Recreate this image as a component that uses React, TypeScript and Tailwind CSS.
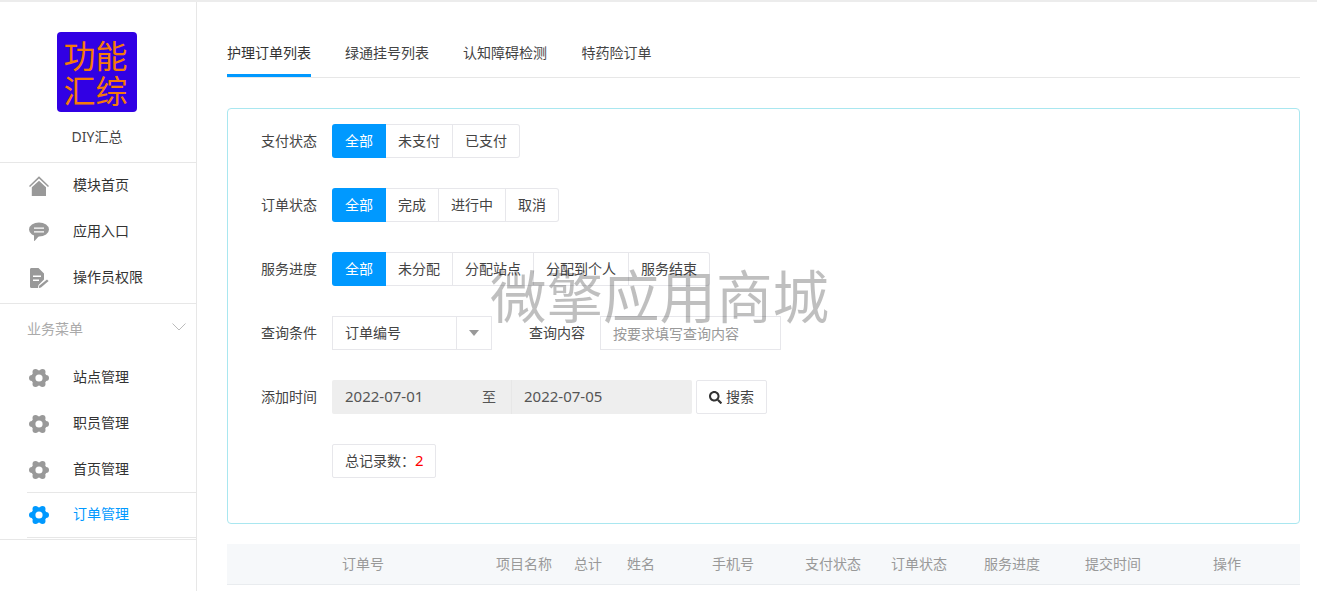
import React from "react";
import { FaSearch } from "react-icons/fa";

const font = { fontFamily: '"Noto Sans","Noto Sans CJK SC",sans-serif' };

function HomeIcon({ className }: { className?: string }) {
  return (
    <svg viewBox="0 0 20 20" className={className} fill="currentColor">
      <path d="M10 .2 20 10l-1 1.100L10 2.600 1 11.100 0 10z" />
      <path d="M10 4.800 17 11.200V20H2.800V11.200z" />
    </svg>
  );
}
function ChatIcon({ className }: { className?: string }) {
  return (
    <svg viewBox="0 0 20 20" className={className}>
      <ellipse cx="10" cy="7.500" rx="10" ry="7" fill="currentColor" />
      <path fill="currentColor" d="M5 12v6.500c0 .5.500.7.800.3L10 14z" />
      <path fill="#fff" d="M5 5.400h10v1.400H5zM5 9.200h10v1.400H5z" />
    </svg>
  );
}
function DocIcon({ className }: { className?: string }) {
  return (
    <svg viewBox="0 0 20 20" className={className}>
      <path fill="currentColor" d="M1 1.500C1 .7 1.600 0 2.400 0H9.500L15 5.500v6l-5.500 5.500-.6 3H2.400C1.600 20 1 19.300 1 18.500z" />
      <path fill="#fff" d="M4 7.500h8v1.500H4zM4 11.500h6v1.500H4z" />
      <path fill="currentColor" d="M18 11.500l1.600 1.600-7.600 6.500-2.200.4.400-2.200z" />
    </svg>
  );
}
function GearIcon({ className }: { className?: string }) {
  return (
    <svg viewBox="0 0 20 20" className={className} fill="currentColor">
      <circle cx="10" cy="10" r="7.800" />
      <circle cx="17" cy="10" r="3" />
      <circle cx="3" cy="10" r="3" />
      <circle cx="6.500" cy="3.900" r="3" />
      <circle cx="13.500" cy="3.900" r="3" />
      <circle cx="6.500" cy="16.100" r="3" />
      <circle cx="13.500" cy="16.100" r="3" />
      <circle cx="10" cy="10" r="3.600" fill="#fff" />
    </svg>
  );
}

function NavItem({ icon, label, active }: { icon: React.ReactNode; label: string; active?: boolean }) {
  return (
    <div className={`flex h-[46px] items-center pl-[29px] ${active ? "text-[#0099ff]" : "text-[#333]"}`}>
      <span className={`flex w-[44px] shrink-0 ${active ? "text-[#0099ff]" : "text-[#999]"}`}>{icon}</span>
      <span className="pb-[2px] text-[14px] leading-none">{label}</span>
    </div>
  );
}

function Segments({ items }: { items: [string, number][] }) {
  return (
    <div className="flex">
      {items.map(([t, w], i) => (
        <div
          key={t}
          style={{ width: w }}
          className={
            i === 0
              ? "flex h-[34px] items-center justify-center rounded-l-[3px] bg-[#0099ff] pb-[2px] text-[14px] text-white"
              : "flex h-[34px] items-center justify-center border-y border-r border-[#e7e7eb] pb-[2px] text-[14px] text-[#444] last:rounded-r-[3px]"
          }
        >
          {t}
        </div>
      ))}
    </div>
  );
}

function FormRow({ label, children, mb }: { label?: string; children: React.ReactNode; mb?: string }) {
  return (
    <div className={`flex h-[34px] items-center ${mb ?? "mb-[30px]"}`}>
      <div className="w-[104px] shrink-0 pb-[2px] pr-[15px] text-right text-[14px] text-[#444]">{label}</div>
      {children}
    </div>
  );
}

const cols: [string, number][] = [
  ["订单号", 154],
  ["项目名称", 78],
  ["总计", 53],
  ["姓名", 85],
  ["手机号", 93],
  ["支付状态", 86],
  ["订单状态", 93],
  ["服务进度", 101],
  ["提交时间", 128],
  ["操作", 87],
];

export default function App() {
  return (
    <div style={font} className="relative h-screen overflow-hidden border-t-2 border-[#ececec] bg-white">
      <div className="flex h-full">
        <aside className="w-[197px] shrink-0 border-r border-[#e7e7e7]">
          <div className="flex h-[161px] flex-col border-b border-[#e7e7e7] pt-[30px]">
            <div className="ml-[57px] flex h-[80px] w-[80px] items-center justify-center rounded-[4px] bg-[#3100e4] pr-[3px] pt-[1px] text-center text-[32px] leading-[35px] text-[#f57a08]">
              功能
              <br />
              汇综
            </div>
            <div className="mt-[15px] w-[194px] text-center text-[14px] leading-[20px] text-[#444]">DIY汇总</div>
          </div>
          <div className="h-[141px] border-b border-[#e7e7e7]">
            <NavItem icon={<HomeIcon className="h-[20px] w-[20px]" />} label="模块首页" />
            <NavItem icon={<ChatIcon className="h-[20px] w-[20px]" />} label="应用入口" />
            <NavItem icon={<DocIcon className="h-[20px] w-[20px]" />} label="操作员权限" />
          </div>
          <div className="flex h-[50px] items-center justify-between pl-[27px] pr-[10px] text-[14px] text-[#aaa]">
            <span className="pb-[2px]">业务菜单</span>
            <svg viewBox="0 0 14 8" className="mb-[5px] h-[8px] w-[14px]" fill="none" stroke="#bbb">
              <path d="M.5.500 7 7l6.500-6.500" />
            </svg>
          </div>
          <div className="h-[138px] pt-px">
            <NavItem icon={<GearIcon className="h-[20px] w-[20px]" />} label="站点管理" />
            <NavItem icon={<GearIcon className="h-[20px] w-[20px]" />} label="职员管理" />
            <NavItem icon={<GearIcon className="h-[20px] w-[20px]" />} label="首页管理" />
          </div>
          <div className="ml-[27px] h-[46px] border-y border-[#e7e7e7] [&>div]:-ml-[27px] [&>div]:h-[44px]">
            <NavItem active icon={<GearIcon className="h-[20px] w-[20px]" />} label="订单管理" />
          </div>
          <div className="mt-px border-t border-[#e7e7e7]" />
        </aside>

        <main className="min-w-0 flex-1 pl-[30px] pr-[17px]">
          <div className="flex h-[76px] border-b border-[#e7e7e7] pt-[30px] text-[14px] text-[#444]">
            <div className="-mb-px h-[45px] w-[84px] border-b-[3px] border-[#0099ff] pt-[11px] leading-[20px] text-[#333]">护理订单列表</div>
            <div className="ml-[34px] pt-[11px] leading-[20px]">绿通挂号列表</div>
            <div className="ml-[34px] pt-[11px] leading-[20px]">认知障碍检测</div>
            <div className="ml-[34.500px] pt-[11px] leading-[20px]">特药险订单</div>
          </div>

          <section className="mt-[30px] h-[416px] rounded-[4px] border border-[#a9e7f0] pt-[15px]">
            <FormRow label="支付状态">
              <Segments items={[["全部", 54], ["未支付", 67], ["已支付", 67]]} />
            </FormRow>
            <FormRow label="订单状态">
              <Segments items={[["全部", 54], ["完成", 53], ["进行中", 67], ["取消", 53]]} />
            </FormRow>
            <FormRow label="服务进度">
              <Segments items={[["全部", 54], ["未分配", 67], ["分配站点", 81], ["分配到个人", 95], ["服务结束", 81]]} />
            </FormRow>
            <FormRow label="查询条件">
              <div className="flex h-[34px] w-[160px] items-center border border-[#e7e7eb] text-[14px] text-[#444]">
                <span className="flex-1 pb-[2px] pl-[12px]">订单编号</span>
                <span className="flex h-full w-[35px] items-center justify-center border-l border-[#e7e7eb]">
                  <span className="h-0 w-0 border-x-[5px] border-t-[6px] border-x-transparent border-t-[#999]" />
                </span>
              </div>
              <div className="ml-[37px] w-[71px] pb-[2px] text-[14px] text-[#444]">查询内容</div>
              <div className="flex h-[34px] w-[181px] items-center border border-[#e7e7eb] pl-[12px] text-[14px] text-[#999]">按要求填写查询内容</div>
            </FormRow>
            <FormRow label="添加时间">
              <div className="flex h-[34px] w-[360px] items-center rounded-[2px] bg-[#eeeeee] text-[#555]">
                <span className="flex h-full w-[150px] items-center pb-[2px] pl-[13px] text-[15px]">2022-07-01</span>
                <span className="flex h-full w-[30px] items-center border-r border-[#e7e7e7] pb-[2px] text-[14px]">至</span>
                <span className="flex h-full items-center pb-[2px] pl-[12px] text-[15px]">2022-07-05</span>
              </div>
              <div className="ml-[4px] flex h-[34px] w-[71px] items-center justify-center gap-[4px] rounded-[2px] border border-[#e7e7eb] text-[14px] text-[#444]">
                <FaSearch className="h-[13px] w-[13px] text-[#333]" />
                <span className="pb-[2px]">搜索</span>
              </div>
            </FormRow>
            <FormRow mb="mb-0">
              <div className="flex h-[34px] w-[104px] items-center rounded-[2px] border border-[#e7e7eb] pb-[2px] pl-[12px] text-[14px] text-[#444]">
                总记录数：<span className="text-[15px] text-[#f00]">2</span>
              </div>
            </FormRow>
          </section>

          <div className="mt-[20px] flex h-[41px] items-center border-b border-[#e9ecef] bg-[#f6f8fa] pb-[2px] pl-[115px] text-[14px] text-[#999]">
            {cols.map(([t, w]) => (
              <div key={t} style={{ width: w }} className="shrink-0">
                {t}
              </div>
            ))}
          </div>
        </main>
      </div>

      <div className="pointer-events-none absolute left-[490px] top-[263px] text-[56.5px] leading-[64px] whitespace-nowrap text-black/25">
        微擎应用商城
      </div>
    </div>
  );
}
